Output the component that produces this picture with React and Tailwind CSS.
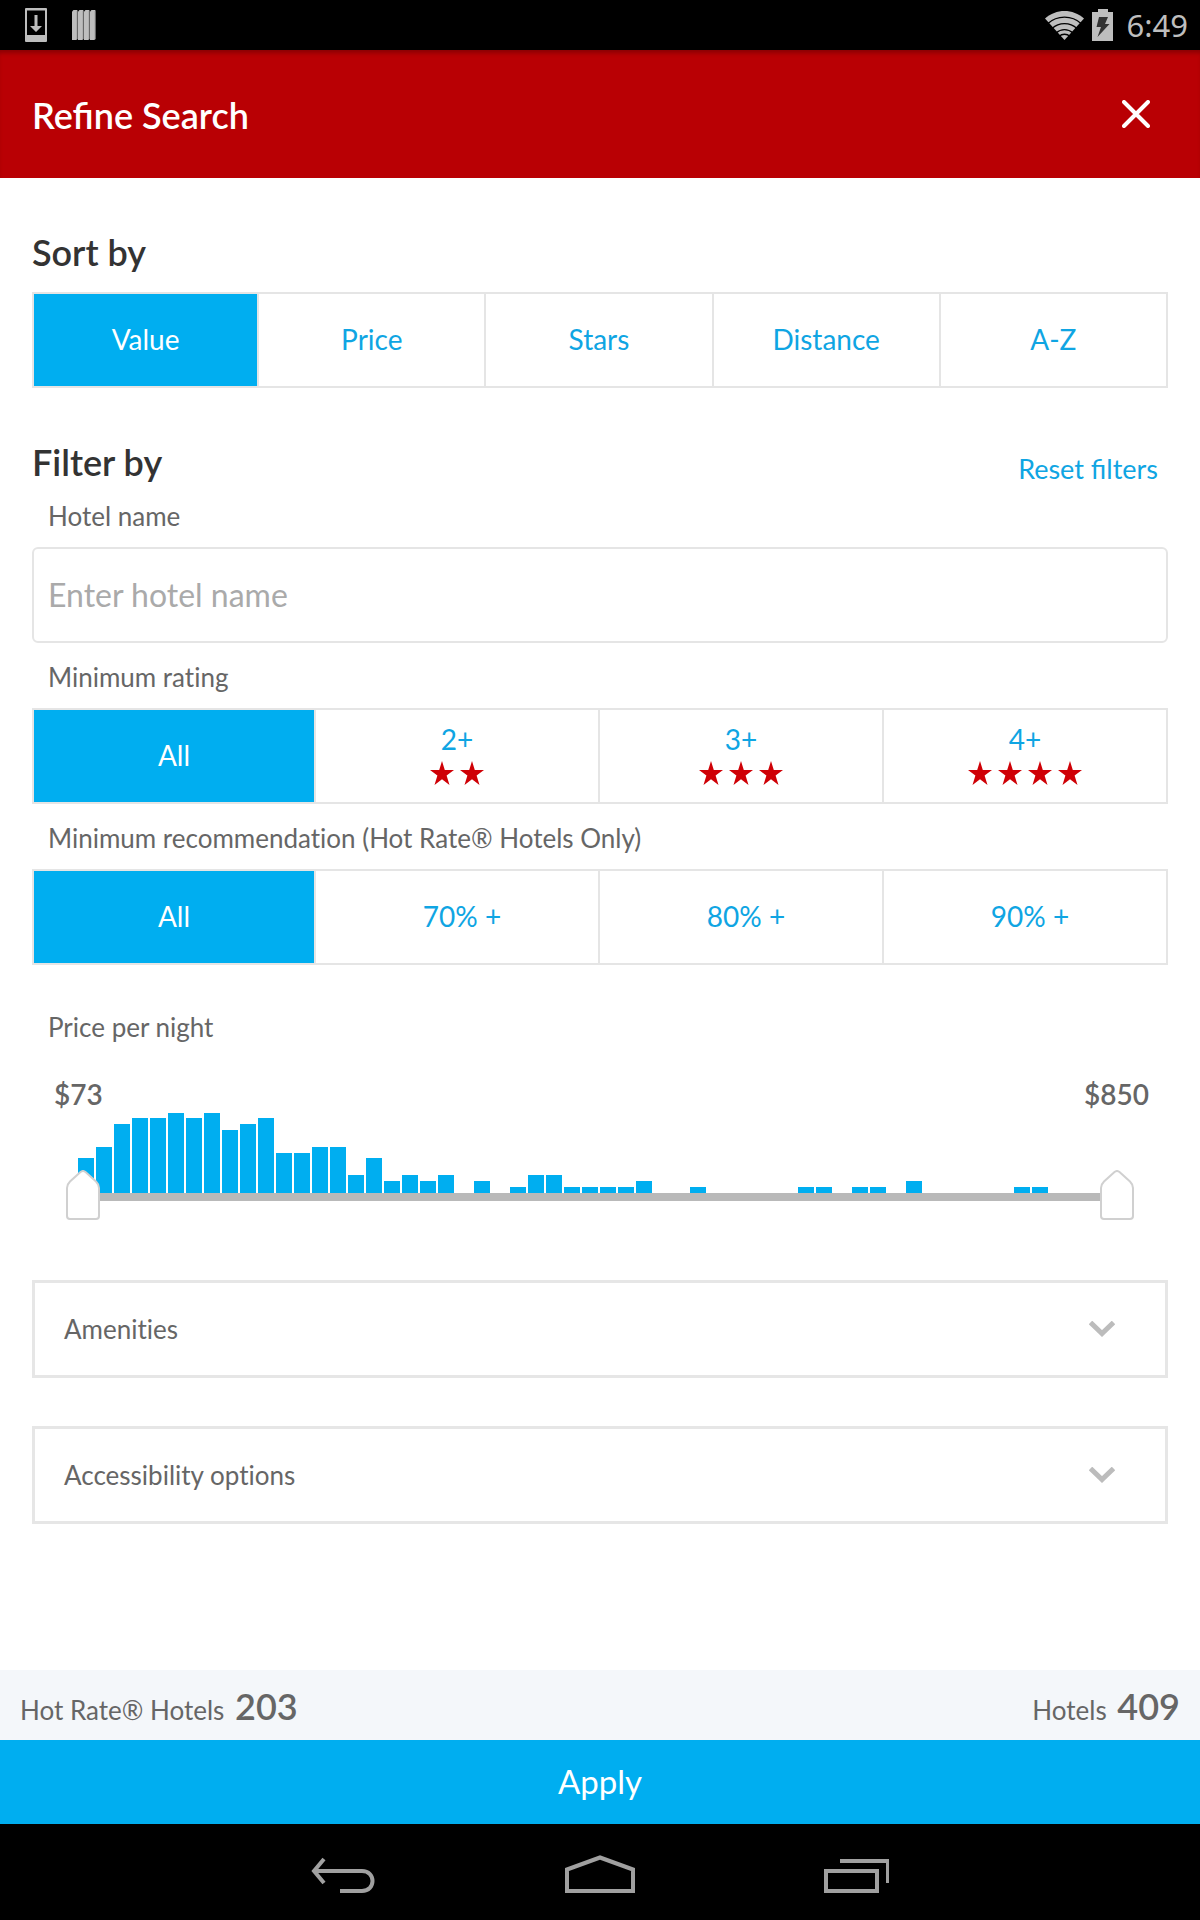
import React, { useState } from "react";

const BARS = [
  35, 46, 69, 75, 75, 80, 75, 80, 63, 69, 75, 40, 40, 46, 46, 18, 35, 12, 18, 12,
  18, 0, 12, 0, 6, 18, 18, 6, 6, 6, 6, 12, 0, 0, 6, 0, 0, 0, 0, 0, 6, 6, 0, 6, 6,
  0, 12, 0, 0, 0, 0, 0, 6, 6, 0, 0, 0, 0,
];

const MIN_PRICE = 73;
const MAX_PRICE = 850;

function StatusBar() {
  return (
    <div className="flex h-[50px] items-center justify-between bg-black pr-3 pl-[25px]">
      <div className="flex items-center gap-[25px]">
        <svg width="22" height="34" viewBox="0 0 22 34" aria-hidden="true">
          <path fill="#bebebe" fillRule="evenodd" d="M1 0h20a1 1 0 0 1 1 1v32a1 1 0 0 1-1 1H1a1 1 0 0 1-1-1V1a1 1 0 0 1 1-1zM2 2.500v24.500h18V2.500z" />
          <path fill="#bebebe" d="M9.500 7h3v11h4.500L11 24l-6-6h4.500z" />
        </svg>
        <svg width="24" height="30" viewBox="0 0 24 30" aria-hidden="true">
          {[0, 6, 12, 18].map((x) => (
            <g key={x}>
              <path fill="#bebebe" d={`M${x} 1.500L${x + 1.5} 0H${x + 5.4}V28.500L${x + 4.5} 30H${x}z`} />
              <path fill="#7d7d7d" d={`M${x + 4.8} 1H${x + 5.6}V29L${x + 4.8} 30z`} />
            </g>
          ))}
        </svg>
      </div>
      <div className="flex items-center">
        <svg width="39" height="29" viewBox="0 0 39 29" aria-hidden="true">
          <path fill="#bebebe" d="M19.500 29L0 7.500C11-2.500 28-2.500 39 7.500z" />
          <g fill="none" stroke="#000" strokeWidth="1.300">
            <path d="M3 12.500C12 4 27 4 36 12.500" />
            <path d="M7 17.500c7-6.500 18-6.500 25 0" />
            <path d="M11 22c5-4.500 12-4.500 17 0" />
            <path d="M14 25.500c3-3 8-3 11 0" />
          </g>
        </svg>
        <svg className="ml-2" width="22" height="32" viewBox="0 0 22 32" aria-hidden="true">
          <path fill="#bebebe" d="M6 0h10v3h5v29H0V3h6z" />
          <path fill="#333" d="M7 8h9l-3 7h4.500L5.500 28l3.500-10H4.500z" />
        </svg>
        <span className="ml-3 font-['Noto_Sans',sans-serif] text-[31px] leading-[50px] text-[#bebebe]">6:49</span>
      </div>
    </div>
  );
}

function Star() {
  return (
    <svg width="24" height="24" viewBox="0 0 24 24" aria-hidden="true">
      <path fill="#cf0006" d="M12 0l2.800 9H24l-7.400 5.400L19.500 24 12 18.200 4.500 24l2.900-9.600L0 9h9.200z" />
    </svg>
  );
}

function Segments({ label, options, columns }) {
  const [active, setActive] = useState(0);
  return (
    <div role="group" aria-label={label} className={`grid h-24 ${columns}`}>
      {options.map((option, i) => (
        <button
          key={option.text}
          type="button"
          aria-pressed={i === active}
          onClick={() => setActive(i)}
          className={`flex flex-col items-center justify-center gap-2 border-y-2 border-r-2 border-[#e5e5e5] pb-0.5 text-[28px] leading-7 first:border-l-2 ${
            i === active ? "bg-[#00aef0] text-white" : "bg-white text-[#0fa5e3]"
          }`}
        >
          <span className={option.indent ? "pl-2.5" : ""}>{option.text}</span>
          {option.stars && (
            <span className="flex gap-1.5">
              {Array.from({ length: option.stars }, (_, n) => (
                <Star key={n} />
              ))}
            </span>
          )}
        </button>
      ))}
    </div>
  );
}

const labelClass =
  "block px-4 pt-[18px] pb-[15px] text-[26px] leading-8 text-[#666] [font-variant-ligatures:none]";

function Thumb({ position }) {
  return (
    <svg
      className="pointer-events-none absolute top-0 -translate-x-1/2"
      style={{ left: `${position}%` }}
      width="34"
      height="50"
      viewBox="0 0 34 50"
      aria-hidden="true"
    >
      <path
        fill="#fff"
        stroke="#d0d0d0"
        strokeWidth="2"
        d="M14.500 2Q17 0 19.500 2L30 11.500Q33 14.500 33 18V46Q33 49 30 49H4Q1 49 1 46V18Q1 14.500 4 11.500z"
      />
    </svg>
  );
}

function PriceSlider() {
  const [low, setLow] = useState(MIN_PRICE);
  const [high, setHigh] = useState(MAX_PRICE);
  const percent = (v) => ((v - MIN_PRICE) / (MAX_PRICE - MIN_PRICE)) * 100;
  const rangeClass =
    "pointer-events-none absolute inset-0 m-0 h-full w-full opacity-0 [&::-webkit-slider-thumb]:pointer-events-auto";
  return (
    <div className="pt-5 pb-[60px]">
      <div className="flex justify-between pr-[19px] pl-[22px] text-[28px] leading-8 font-semibold text-[#666]">
        <output>${low}</output>
        <output>${high}</output>
      </div>
      <div className="mx-[46px] mt-[3px] flex h-20 items-end gap-0.5 pr-0.5">
        {BARS.map((height, i) => (
          <div key={i} className="flex-1 bg-[#00aef0]" style={{ height }} />
        ))}
      </div>
      <div className="mx-[51px] h-[27px]">
        <div className="h-2 bg-[#b9b9b9]" />
        <div className="relative -mt-[31px] h-[50px]">
          <Thumb position={percent(low)} />
          <Thumb position={percent(high)} />
          <input
            type="range"
            aria-label="Lowest price"
            min={MIN_PRICE}
            max={MAX_PRICE}
            value={low}
            onChange={(e) => setLow(Math.min(Number(e.target.value), high))}
            className={rangeClass}
          />
          <input
            type="range"
            aria-label="Highest price"
            min={MIN_PRICE}
            max={MAX_PRICE}
            value={high}
            onChange={(e) => setHigh(Math.max(Number(e.target.value), low))}
            className={rangeClass}
          />
        </div>
      </div>
    </div>
  );
}

function Disclosure({ children }) {
  return (
    <button
      type="button"
      aria-expanded="false"
      className="flex h-[98px] w-full items-center justify-between border-3 border-[#e6e6e6] pr-[50px] pl-[29px] text-[26px] leading-8 text-[#666] [font-variant-ligatures:none]"
    >
      {children}
      <svg width="26" height="16" viewBox="0 0 26 16" fill="none" stroke="#bcbcbc" strokeWidth="5" aria-hidden="true">
        <path d="M1.500 1.500L13 12.500 24.500 1.500" />
      </svg>
    </button>
  );
}

function NavBar() {
  const cell = "flex h-24 w-64 items-center justify-center";
  return (
    <nav className="flex h-24 justify-center bg-black pt-0.5">
      <button type="button" aria-label="Back" className={cell}>
        <svg width="66" height="38" viewBox="0 0 66 38" fill="none" stroke="#a0a0a0" strokeWidth="4" aria-hidden="true">
          <path d="M13 4L3 16l10 12M3 16h48c14 0 14 20 0 20H29" />
        </svg>
      </button>
      <button type="button" aria-label="Home" className={cell}>
        <svg width="70" height="38" viewBox="0 0 70 38" fill="none" stroke="#a0a0a0" strokeWidth="4" aria-hidden="true">
          <path d="M2 36V14.500L35 2.500l33 12V36z" />
        </svg>
      </button>
      <button type="button" aria-label="Recent apps" className={cell}>
        <svg width="66" height="38" viewBox="0 0 66 38" fill="none" stroke="#a0a0a0" strokeWidth="4" aria-hidden="true">
          <path d="M3 16h51v20H3zM17 6h48v22" />
        </svg>
      </button>
    </nav>
  );
}

export default function App() {
  return (
    <div className="flex min-h-screen flex-col bg-white font-[Lato,sans-serif]">
      <StatusBar />
      <header className="flex h-32 items-center justify-between bg-[#b90004] px-8 shadow-[inset_0_5px_4px_-2px_rgba(0,0,0,0.25)]">
        <h1 className="pt-0.5 text-4xl font-semibold text-white">Refine Search</h1>
        <button type="button" aria-label="Close" className="flex h-16 w-16 items-center justify-center">
          <svg width="28" height="28" viewBox="0 0 28 28" stroke="#fff" strokeWidth="4" strokeLinecap="round" aria-hidden="true">
            <path d="M2 2l24 24M26 2L2 26" />
          </svg>
        </button>
      </header>

      <main className="flex-1 px-8 pb-16">
        <h2 className="pt-[54px] pb-5 text-4xl font-semibold text-[#333]">Sort by</h2>
        <Segments
          label="Sort by"
          columns="grid-cols-5"
          options={[{ text: "Value" }, { text: "Price" }, { text: "Stars" }, { text: "Distance" }, { text: "A-Z" }]}
        />

        <div className="flex items-end justify-between pt-[54px] pr-2.5">
          <h2 className="text-4xl font-semibold text-[#333]">Filter by</h2>
          <a href="#reset" className="text-[27px] leading-[26px] text-[#0fa5e3]">Reset filters</a>
        </div>

        <label htmlFor="hotel-name" className={labelClass}>Hotel name</label>
        <input
          id="hotel-name"
          type="text"
          placeholder="Enter hotel name"
          className="block h-24 w-full rounded-md border-2 border-[#e5e5e5] px-3.5 pb-0.5 text-[32px] text-[#333] placeholder:text-[#aaa]"
        />

        <p className={labelClass}>Minimum rating</p>
        <Segments
          label="Minimum rating"
          columns="grid-cols-4"
          options={[{ text: "All" }, { text: "2+", stars: 2 }, { text: "3+", stars: 3 }, { text: "4+", stars: 4 }]}
        />

        <p className={labelClass}>Minimum recommendation (Hot Rate® Hotels Only)</p>
        <Segments
          label="Minimum recommendation"
          columns="grid-cols-4"
          options={[
            { text: "All" },
            { text: "70% +", indent: true },
            { text: "80% +", indent: true },
            { text: "90% +", indent: true },
          ]}
        />

        <div className="pt-7">
          <p className={labelClass}>Price per night</p>
          <PriceSlider />
        </div>

        <div className="flex flex-col gap-12">
          <Disclosure>Amenities</Disclosure>
          <Disclosure>Accessibility options</Disclosure>
        </div>
      </main>

      <footer>
        <div className="flex h-[70px] items-center justify-between bg-[#f4f7fa] px-5 pt-1.5 text-[26px] text-[#666]">
          <p>
            Hot Rate® Hotels <span className="ml-1 text-4xl font-semibold">203</span>
          </p>
          <p>
            Hotels <span className="ml-1 text-4xl font-semibold">409</span>
          </p>
        </div>
        <button type="button" className="block h-[84px] w-full bg-[#00aef0] text-[33px] text-white">Apply</button>
        <NavBar />
      </footer>
    </div>
  );
}
